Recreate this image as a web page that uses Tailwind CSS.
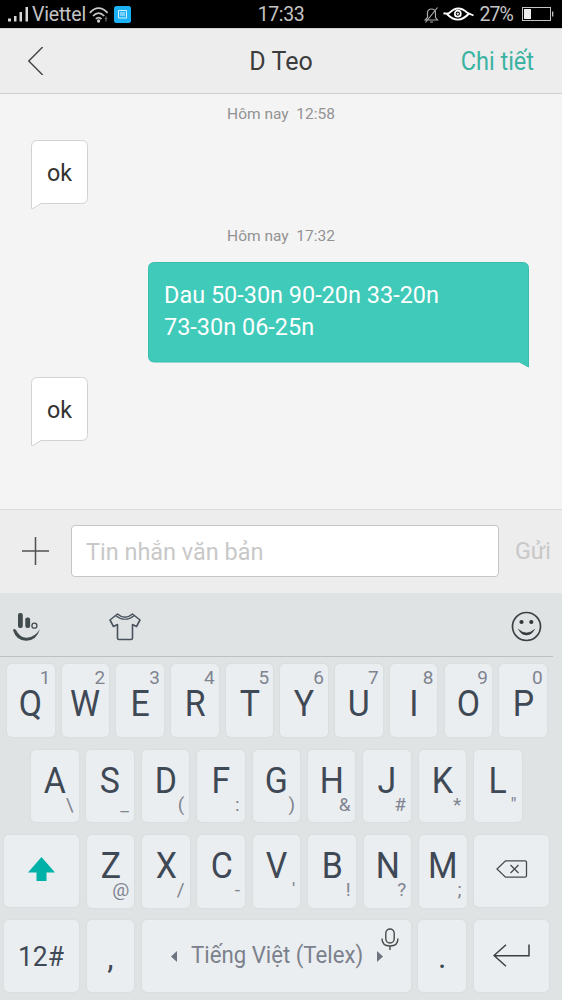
<!DOCTYPE html>
<html lang="vi">
<head>
<meta charset="utf-8">
<title>D Teo</title>
<script src="https://cdn.jsdelivr.net/npm/@tailwindcss/browser@4"></script>
</head>
<body class="w-[562px] h-[1000px] overflow-hidden bg-[#f4f4f4] font-['Roboto',sans-serif] flex flex-col">

<!-- Status bar -->
<div class="h-7 shrink-0 bg-black text-[#c4c4c4] grid grid-cols-[1fr_auto_1fr] items-center pl-2 pr-2">
  <div class="flex items-center">
    <svg class="w-5 h-[15px] mr-1" viewBox="0 0 20 15" fill="#d6d6d6"><path d="M0 11.5h3v3H0zM6 9h2.500v5.500H6zM11.500 5H14v9.500h-2.500zM17.500 0H20v14.500h-2.500z"/></svg>
    <span class="text-[19.500px] leading-7 pt-px tracking-[-0.2px]">Viettel</span>
    <svg class="w-5 h-4 ml-[3px] mt-px" viewBox="0 0 20 16" fill="none" stroke="#c8c8c8" stroke-width="1.700"><path d="M.8 5.800Q9.500-3.400 18.600 5.800M4 9Q9.500 3.300 15.300 9M6.800 12Q9.500 9.300 12.500 12"/><circle cx="9.600" cy="14" r=".8" fill="#c8c8c8"/><path d="M17 9.500v5M15.700 11.500h2.600" stroke="#666" stroke-width="1.200"/></svg>
    <svg class="w-[17px] h-[17px] ml-[5px]" viewBox="0 0 17 17"><rect width="17" height="17" rx="2.500" fill="#1cb0f6"/><path d="M4.500 4.500h8v7.500h-8zM6 7h5M6 9h5" fill="none" stroke="#d5f1ff"/></svg>
  </div>
  <span class="text-[19.500px] leading-7 pt-px tracking-[-0.4px]">17:33</span>
  <div class="flex items-center justify-end">
    <svg class="w-[15px] h-4 mr-1" viewBox="0 0 15 16" fill="none" stroke="#aaa" stroke-width="1.200"><path d="M1 13h12.500L11.500 10.500V6Q11.500 2 7.500 2T3.500 6v4.500zM6 15h3M13.500.5L1.500 15.500"/></svg>
    <svg class="w-[31px] h-[15px] mr-[5px]" viewBox="0 0 31 15" fill="none" stroke="#fff"><path d="M.5 6.200Q4 7 6 6.200Q15-3 24 5.500Q27 7 30.500 8.500M4 7Q15 18.500 26 6.500" stroke-width="1.900"/><circle cx="14.800" cy="6.700" r="3" stroke-width="1.700"/><circle cx="14.800" cy="6.700" r=".7" fill="#fff"/></svg>
    <span class="text-[19.500px] leading-7 pt-px tracking-[-0.9px]">27%</span>
    <svg class="w-8 h-[15px] ml-[9px]" viewBox="0 0 32 15"><rect x=".5" y=".5" width="28" height="13" fill="none" stroke="#c4c4c4"/><path d="M2 2h7v10H2z" fill="#eee"/><path d="M30 4.500h1.300v5H30z" fill="#c4c4c4"/></svg>
  </div>
</div>

<!-- Conversation header -->
<header class="h-[66px] shrink-0 bg-[#ededed] border-y border-[#d0d0d0] grid grid-cols-[1fr_auto_1fr] items-center pl-7 pr-7">
  <svg class="w-4 h-7" viewBox="0 0 16 28" fill="none" stroke="#444" stroke-width="1.400"><path d="M14.700 0L.8 14l13.900 14"/></svg>
  <h1 class="text-[25px] text-[#3c3c3c] pt-0.5">D Teo</h1>
  <span class="text-[25px] text-[#3bb3a2] justify-self-end pt-0.5 origin-right scale-x-[0.94]">Chi tiết</span>
</header>

<!-- Messages -->
<main class="h-[415px] shrink-0 flex flex-col">
  <p class="mt-[10px] h-5 leading-5 text-[15.500px] text-[#929292] text-center whitespace-pre">Hôm nay  12:58</p>
  <div class="relative w-[57px] h-[69px] mt-[16px] ml-[31px] text-[24px] leading-[67px] text-[#333] text-center">
    <svg class="absolute inset-0" width="57" height="69" viewBox="0 0 57 69"><path d="M.5 68.500V6.500q0-6 6-6h44q6 0 6 6v51q0 6-6 6H10L2 68.500z" fill="#fff" stroke="#d2d2d2"/></svg>
    <span class="relative inline-block origin-left scale-x-[0.97]">ok</span>
  </div>
  <p class="mt-[17px] h-5 leading-5 text-[15.500px] text-[#929292] text-center whitespace-pre">Hôm nay  17:32</p>
  <div class="relative w-[381px] h-[106px] mt-[16px] ml-[148px] pl-4 pt-[17px] text-[24px] leading-8 text-white">
    <svg class="absolute inset-0" width="381" height="106" viewBox="0 0 381 106"><path d="M.5 6.500q0-6 6-6h368q6 0 6 6v98.500l-9-5h-365q-6 0-6-6z" fill="#3fcab9" stroke="#38bdac"/></svg>
    <span class="relative block whitespace-nowrap origin-left scale-x-[0.977]">Dau 50-30n 90-20n 33-20n<br>73-30n 06-25n</span>
  </div>
  <div class="relative w-[57px] h-[69px] mt-[9px] ml-[31px] text-[24px] leading-[67px] text-[#333] text-center">
    <svg class="absolute inset-0" width="57" height="69" viewBox="0 0 57 69"><path d="M.5 68.500V6.500q0-6 6-6h44q6 0 6 6v51q0 6-6 6H10L2 68.500z" fill="#fff" stroke="#d2d2d2"/></svg>
    <span class="relative inline-block origin-left scale-x-[0.97]">ok</span>
  </div>
</main>

<!-- Composer -->
<div class="h-[84px] shrink-0 bg-[#ededed] border-t border-[#dcdcdc] flex items-center pl-[22px] pb-[2px]">
  <svg class="w-[27px] h-[28px] mr-[22px]" viewBox="0 0 27 28" fill="none" stroke="#505050" stroke-width="1.500"><path d="M0 14h27M13.500 0v28"/></svg>
  <div class="w-[428px] h-[52px] bg-white border border-[#c6c6c6] rounded-[4px] pl-[14px] text-[24px] leading-[52px] text-[#c8c8c8]"><span class="inline-block origin-left scale-x-[0.977]">Tin nhắn văn bản</span></div>
  <span class="ml-4 text-[24px] text-[#c8c8c8] origin-left scale-x-[0.97]">Gửi</span>
</div>

<!-- Keyboard -->
<section class="h-[407px] shrink-0 bg-[#dfe3e4] flex flex-col text-[#3f4955]">
  <div class="h-16 w-[553px] border-b border-[#bbc2c6] flex items-center pl-[13px] pr-[11px]">
    <svg class="w-7 h-7 mt-1" viewBox="0 0 28 28"><rect x="5" y="0" width="4.800" height="15" rx="2" fill="#414c4e"/><rect x="12.300" y="4.500" width="4.800" height="10.500" rx="2" fill="#414c4e"/><circle cx="21.400" cy="12.700" r="2.500" fill="none" stroke="#414c4e" stroke-width="1.300"/><path d="M0 17.300q1-2.600 3-.3 4 8 11 7.700 8-.5 13-8.700-3.500 11.500-13.500 11.800T0 17.300z" fill="#414c4e"/></svg>
    <svg class="w-8 h-7 ml-[68px] mt-1" viewBox="0 0 32 28" fill="none" stroke="#4a535d" stroke-width="1.600" stroke-linejoin="round"><path d="M8.500 1L1 7l3.500 6.500L8.500 11.500V25q0 1.500 1.500 1.500h12q1.500 0 1.500-1.500V11.500l4 2L31 7l-7.500-6q-7.500 6.500-15 0z"/><path d="M6.500 2.500q9.500 7.500 19 0" stroke-width="1.100"/></svg>
    <svg class="w-[31px] h-[31px] ml-auto mt-1" viewBox="0 0 31 31"><circle cx="15.500" cy="15.500" r="14" fill="none" stroke="#3e4246" stroke-width="1.700"/><circle cx="10.500" cy="11" r="2.100" fill="#33373b"/><circle cx="20.300" cy="11" r="2.100" fill="#33373b"/><path d="M7.500 18.500q8 7 16 0-3 5.500-8 5.500t-8-5.500z" fill="#33373b" stroke="#33373b" stroke-width=".6"/></svg>
  </div>

  <div class="mt-[7px] ml-[7px] flex gap-[7.200px]" data-keys="Q1 W2 E3 R4 T5 Y6 U7 I8 O9 P0" data-kind="top"></div>
  <div class="mt-[13px] ml-[31px] flex gap-[7.900px]" data-keys="A\ S_ D( F: G) H&amp; J# K* L&quot;" data-kind="mid"></div>
  <div class="mt-[13px] ml-1 flex gap-[7.900px]">
    <div class="w-[74.800px] h-[72px] bg-[#ebeef1] rounded-[5px] shadow-[0_0_1px_1px_#d9dedf] flex items-center justify-center">
      <svg class="w-[27px] h-6 -mt-1" viewBox="0 0 27 24"><path d="M13.500 0L27 15.500h-8.500V24h-10v-8.500H0z" fill="#00b1a8"/></svg>
    </div>
    <div class="flex gap-[7.900px]" data-keys="Z@ X/ C- V' B! N? M;" data-kind="mid"></div>
    <div class="w-[74.500px] h-[72px] bg-[#ebeef1] rounded-[5px] shadow-[0_0_1px_1px_#d9dedf] flex items-center justify-center">
      <svg class="w-8 h-[18px] -mt-1" viewBox="0 0 32 18" fill="none" stroke="#444a4e" stroke-width="1.300"><path d="M1 9l8.500-8.200H29q1.500 0 1.500 1.500v13.400q0 1.500-1.500 1.500H9.500z"/><path d="M14.500 5l8 8M22.500 5l-8 8"/></svg>
    </div>
  </div>
  <div class="mt-[12.500px] ml-1 flex gap-[7.900px]">
    <div class="w-[74.800px] h-[72px] bg-[#ebeef1] rounded-[5px] shadow-[0_0_1px_1px_#d9dedf] text-center text-[27.500px] leading-[74px]"><span class="inline-block scale-x-[0.96]">12#</span></div>
    <div class="w-[47.500px] h-[72px] bg-[#ebeef1] rounded-[5px] shadow-[0_0_1px_1px_#d9dedf] text-center text-[32px] leading-[74px]">,</div>
    <div class="relative w-[268.500px] h-[72px] bg-[#ebeef1] rounded-[5px] shadow-[0_0_1px_1px_#d9dedf] flex items-center text-[#7b818c] pl-[29px]">
      <svg class="w-1.5 h-[11px]" viewBox="0 0 6 11"><path d="M6 0v11L0 5.500z" fill="#6d7480"/></svg>
      <span class="w-[172px] ml-[14px] text-[23px] leading-[74px] whitespace-nowrap origin-left scale-x-[0.965]">Tiếng Việt (Telex)</span>
      <svg class="w-1.5 h-[11px] ml-[14px]" viewBox="0 0 6 11"><path d="M0 0v11l6-5.500z" fill="#6d7480"/></svg>
      <svg class="absolute left-[239px] top-[8px]" width="18" height="23" viewBox="0 0 18 23" fill="none" stroke="#4a4a4a" stroke-width="1.400"><rect x="4.800" y="1" width="8.400" height="14" rx="4.200"/><path d="M1 10.500q0 7.500 8 7.500t8-7.500M9 18v4"/></svg>
    </div>
    <div class="w-[47.500px] h-[72px] bg-[#ebeef1] rounded-[5px] shadow-[0_0_1px_1px_#d9dedf] text-center text-[32px] leading-[74px]">.</div>
    <div class="w-[75px] h-[72px] bg-[#ebeef1] rounded-[5px] shadow-[0_0_1px_1px_#d9dedf] flex items-center justify-center">
      <svg class="w-[37px] h-[23px] -mt-0.5" viewBox="0 0 37 23" fill="none" stroke="#3c3f42" stroke-width="1.500"><path d="M13 .7L1 11.500 13 22.300M1 11.700h35V.5"/></svg>
    </div>
  </div>
</section>

<script>
  // Letter keys: first character is the main label, second is the long-press hint.
  const kinds = {
    top: { key: 'relative w-[47.500px] h-[72.500px] bg-[#ebeef1] rounded-[5px] shadow-[0_0_1px_1px_#d9dedf] text-center text-[36px] leading-[80px]',
           hint: 'absolute right-[4px] top-[4px] text-[19px] leading-5 text-[#7f8490]' },
    mid: { key: 'relative w-[47.500px] h-[72.500px] bg-[#ebeef1] rounded-[5px] shadow-[0_0_1px_1px_#d9dedf] text-center text-[36px] leading-[63px]',
           hint: 'absolute right-[5px] top-[45px] text-[19px] leading-5 text-[#7f8490]' }
  };
  document.querySelectorAll('[data-keys]').forEach(row => {
    const k = kinds[row.dataset.kind];
    row.dataset.keys.split(' ').forEach(pair => {
      const key = document.createElement('div');
      key.className = k.key;
      const label = document.createElement('span');
      label.className = 'inline-block scale-x-[0.94]';
      label.textContent = pair[0];
      const hint = document.createElement('span');
      hint.className = k.hint;
      hint.textContent = pair[1];
      key.append(label, hint);
      row.append(key);
    });
  });
</script>
</body>
</html>
